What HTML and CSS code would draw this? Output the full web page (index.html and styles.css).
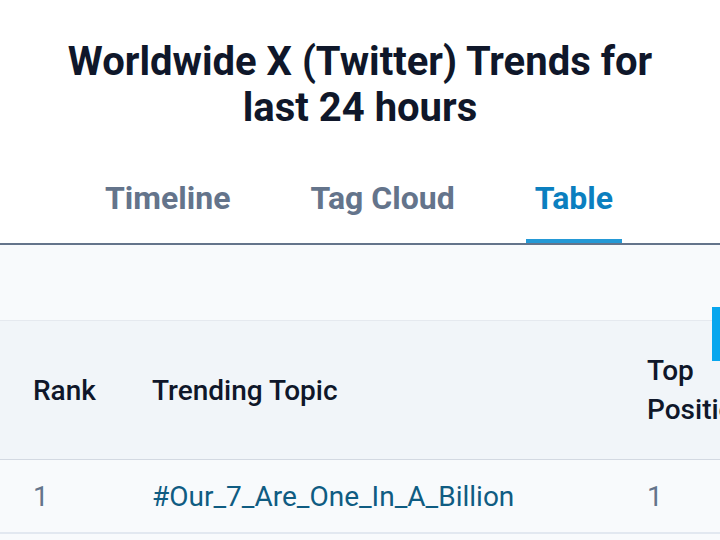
FILE: index.html
```html
<!DOCTYPE html>
<html lang="en">
<head>
<meta charset="utf-8">
<title>Worldwide X (Twitter) Trends</title>
<link rel="stylesheet" href="styles.css">
</head>
<body>
<div class="page">
  <h1 class="title">Worldwide X (Twitter) Trends for last 24 hours</h1>
  <nav class="tabs">
    <a class="tab">Timeline</a>
    <a class="tab">Tag Cloud</a>
    <a class="tab active">Table</a>
  </nav>
  <section class="panel">
    <div class="spacer"></div>
    <div class="table">
      <div class="row head">
        <div class="cell">Rank</div>
        <div class="cell">Trending Topic</div>
        <div class="cell">Top Position</div>
      </div>
      <div class="row body">
        <div class="cell muted">1</div>
        <div class="cell"><a class="topic">#Our_7_Are_One_In_A_Billion</a></div>
        <div class="cell muted">1</div>
      </div>
    </div>
    <div class="scroll-thumb"></div>
  </section>
</div>
</body>
</html>
```

FILE: styles.css
```css
html, body {
  margin: 0;
  padding: 0;
  background: #ffffff;
  overflow: hidden;
}
body {
  font-family: Roboto, "Liberation Sans", sans-serif;
  width: 720px;
  height: 540px;
}
.page {
  width: 720px;
}
.title {
  margin: 39px auto 0;
  width: 600px;
  text-align: center;
  font-size: 40px;
  line-height: 46px;
  font-weight: 700;
  color: #0f172a;
}
.tabs {
  display: flex;
  justify-content: center;
  gap: 62px;
  margin-top: 34px;
  border-bottom: 2px solid #64748b;
  padding-right: 2px;
}
.tab {
  display: block;
  padding: 15px 9px 23px;
  font-size: 32px;
  line-height: 36px;
  font-weight: 700;
  color: #64748b;
  border-bottom: 4px solid transparent;
}
.tab.active {
  color: #0b7fbf;
  border-bottom-color: #2499d6;
}
.panel {
  position: relative;
  background: #f8fafc;
  height: 300px;
}
.spacer {
  height: 75px;
}
.table {
  border-top: 1px solid #e5e9ef;
  width: 800px;
}
.row {
  display: grid;
  grid-template-columns: 135px 495px 170px;
}
.cell {
  padding: 0 16px 0 33px;
  font-size: 28px;
  line-height: 39px;
  box-sizing: border-box;
}
.cell + .cell {
  padding-left: 17px;
}
.row.head {
  background: #f1f5f9;
  border-bottom: 1px solid #d3d9e2;
  align-items: center;
  height: 138px;
}
.row.head .cell {
  font-weight: 500;
  color: #0f172a;
}
.row.head .cell:last-child {
  padding-right: 60px;
}
.row.body {
  background: #f8fafc;
  border-bottom: 2px solid #e2e8f0;
  align-items: center;
  height: 72px;
}
.muted {
  color: #64748b;
}
.topic {
  color: #0f5c82;
}
.scroll-thumb {
  position: absolute;
  right: 0;
  top: 62px;
  width: 8px;
  height: 54px;
  background: #07a6ee;
}
```
